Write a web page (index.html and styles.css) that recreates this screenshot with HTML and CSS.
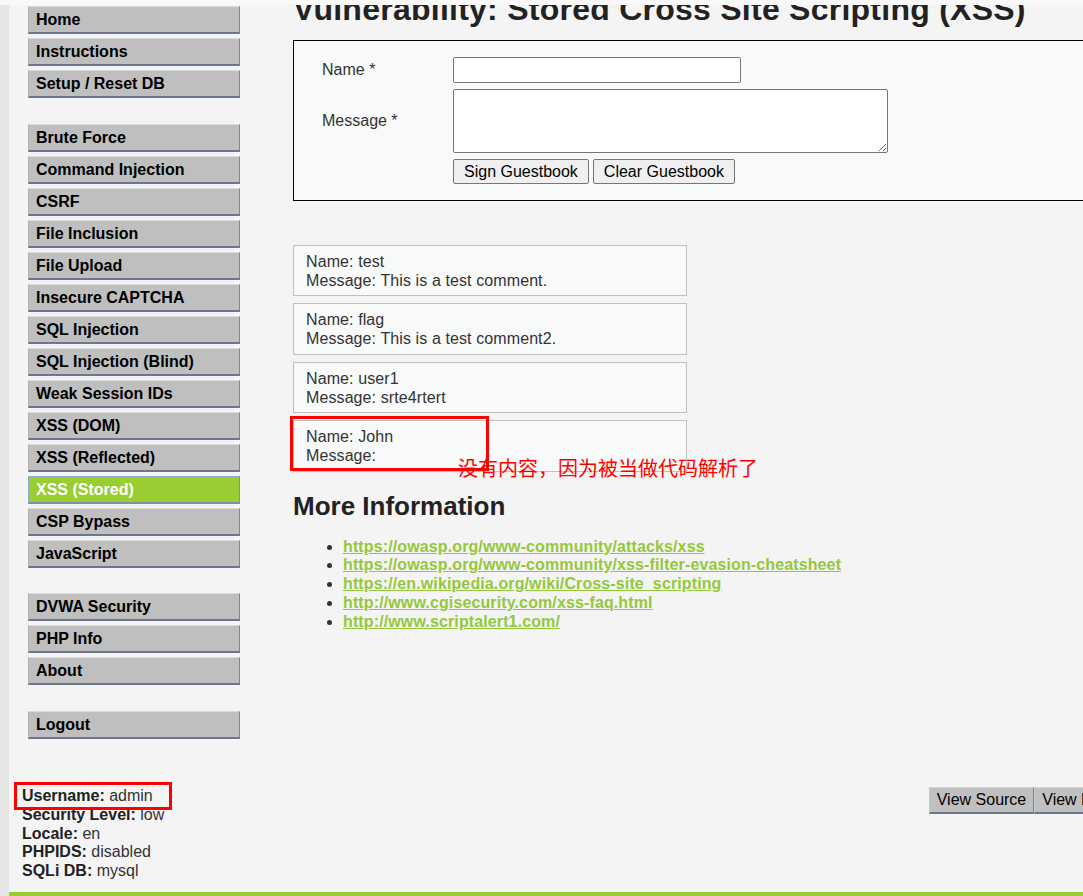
FILE: index.html
```html
<!DOCTYPE html>
<html lang="en">
<head>
<meta charset="utf-8">
<title>Vulnerability: Stored Cross Site Scripting (XSS)</title>
<link rel="stylesheet" href="styles.css">
</head>
<body>
<div class="topband"></div>
<div class="page">
  <div class="cols">
    <aside class="sidebar">
      <div class="menu">
        <ul class="group">
          <li><a class="item">Home</a></li>
          <li><a class="item">Instructions</a></li>
          <li><a class="item">Setup / Reset DB</a></li>
        </ul>
        <ul class="group">
          <li><a class="item">Brute Force</a></li>
          <li><a class="item">Command Injection</a></li>
          <li><a class="item">CSRF</a></li>
          <li><a class="item">File Inclusion</a></li>
          <li><a class="item">File Upload</a></li>
          <li><a class="item">Insecure CAPTCHA</a></li>
          <li><a class="item">SQL Injection</a></li>
          <li><a class="item">SQL Injection (Blind)</a></li>
          <li><a class="item">Weak Session IDs</a></li>
          <li><a class="item">XSS (DOM)</a></li>
          <li><a class="item">XSS (Reflected)</a></li>
          <li><a class="item active">XSS (Stored)</a></li>
          <li><a class="item">CSP Bypass</a></li>
          <li><a class="item">JavaScript</a></li>
        </ul>
        <ul class="group">
          <li><a class="item">DVWA Security</a></li>
          <li><a class="item">PHP Info</a></li>
          <li><a class="item">About</a></li>
        </ul>
        <ul class="group">
          <li><a class="item">Logout</a></li>
        </ul>
      </div>
      <div class="userinfo">
        <div class="mark mark-user"></div>
        <div><b>Username:</b> admin</div>
        <div><b>Security Level:</b> low</div>
        <div><b>Locale:</b> en</div>
        <div><b>PHPIDS:</b> disabled</div>
        <div><b>SQLi DB:</b> mysql</div>
      </div>
    </aside>
    <main class="content">
      <h1 class="title">Vulnerability: Stored Cross Site Scripting (XSS)</h1>
      <div class="code-area">
        <form class="gb-form">
          <label class="lbl">Name *</label>
          <div><input class="txt" type="text"></div>
          <label class="lbl">Message *</label>
          <div><textarea class="msg"></textarea></div>
          <span></span>
          <div class="btns">
            <button type="button" class="btn">Sign Guestbook</button>
            <button type="button" class="btn">Clear Guestbook</button>
          </div>
        </form>
      </div>
      <div class="comments">
        <div class="comment">Name: test<br>Message: This is a test comment.</div>
        <div class="comment">Name: flag<br>Message: This is a test comment2.</div>
        <div class="comment">Name: user1<br>Message: srte4rtert</div>
        <div class="comment annotated">Name: John<br>Message: 
          <div class="mark mark-john"></div>
          <div class="note">没有内容，因为被当做代码解析了</div>
        </div>
      </div>
      <h2 class="subtitle">More Information</h2>
      <ul class="links">
        <li><a class="link">https://owasp.org/www-community/attacks/xss</a></li>
        <li><a class="link">https://owasp.org/www-community/xss-filter-evasion-cheatsheet</a></li>
        <li><a class="link">https://en.wikipedia.org/wiki/Cross-site_scripting</a></li>
        <li><a class="link">http://www.cgisecurity.com/xss-faq.html</a></li>
        <li><a class="link">http://www.scriptalert1.com/</a></li>
      </ul>
      <div class="popups">
        <button type="button" class="popup">View Source</button>
        <button type="button" class="popup">View Help</button>
      </div>
    </main>
  </div>
  <div class="footer-bar"></div>
</div>
</body>
</html>
```
FILE: styles.css
```css
html, body {
  margin: 0;
  padding: 0;
  overflow: hidden;
  background: #f4f4f4;
}
body {
  width: 1083px;
  height: 896px;
  font-family: "Liberation Sans", Arial, sans-serif;
  font-size: 16px;
  line-height: 18.75px;
  color: #333;
  position: relative;
}
.topband {
  position: absolute;
  left: 0;
  top: 0;
  width: 100%;
  height: 5px;
  background: #f9f9f9;
  z-index: 5;
}
.page {
  height: 896px;
  box-sizing: border-box;
  border-left: 9px solid #e6e6e6;
  display: flex;
  flex-direction: column;
}
.cols {
  flex: 1;
  display: flex;
  min-height: 0;
}
.sidebar {
  width: 284px;
  flex-shrink: 0;
}
.menu {
  padding: 6px 0 0 19px;
}
.group {
  list-style: none;
  margin: 0;
  padding: 0;
  width: 212px;
}
.group + .group {
  margin-top: 25.5px;
}
.group li {
  margin-bottom: 4px;
}
.item {
  display: block;
  box-sizing: border-box;
  height: 28px;
  line-height: 24px;
  padding: 1px 0 0 7px;
  background: #bfbfbf;
  border-style: solid;
  border-width: 1px 1px 2px 1px;
  border-color: #dadada #7d8595 #6d778a #b2b2b2;
  color: #000;
  font-weight: bold;
  white-space: nowrap;
}
.item.active {
  background: #9acd32;
  color: #fff;
  border-color: #8fa9c0 #7e8fa8 #7e8fa8 #8fa9c0;
}
.userinfo {
  position: relative;
  margin: 48.5px 0 0 13px;
  color: #333;
}
.userinfo b {
  color: #222;
}
.mark {
  position: absolute;
  border: 3px solid #ff0000;
  box-sizing: border-box;
  z-index: 3;
}
.mark-user {
  left: -8px;
  top: -5px;
  width: 158px;
  height: 28px;
}
.content {
  width: 829px;
  flex-shrink: 0;
}
.title {
  margin: -10px 0 0 0;
  font-size: 32px;
  line-height: 38px;
  font-weight: bold;
  color: #222;
  letter-spacing: 0.25px;
  white-space: nowrap;
}
.code-area {
  margin-top: 12px;
  border: 1px solid #000;
  background: #f8f9f9;
  padding: 16px 20px 16px 28px;
}
.gb-form {
  display: grid;
  grid-template-columns: 131px auto;
  row-gap: 6px;
  align-items: center;
}
.lbl {
  color: #333;
}
.txt {
  display: block;
  box-sizing: border-box;
  width: 288px;
  height: 26px;
  border: 1px solid #767676;
  border-radius: 2px;
  background: #fff;
  margin: 0;
}
.msg {
  display: block;
  box-sizing: border-box;
  width: 435px;
  height: 64px;
  border: 1px solid #767676;
  border-radius: 2px;
  background: #fff;
  margin: 0;
}
.btns {
  display: flex;
  gap: 4px;
}
.btn {
  box-sizing: border-box;
  height: 25px;
  padding: 0 10px;
  margin: 0;
  font-family: "Liberation Sans", Arial, sans-serif;
  font-size: 16px;
  color: #000;
  background: #efefef;
  border: 1px solid #767676;
  border-radius: 2px;
}
.comments {
  margin-top: 44px;
}
.comment {
  width: 394px;
  box-sizing: border-box;
  padding: 7px 12px 5px;
  margin-bottom: 7px;
  border: 1px solid #c0c0c0;
  background: #f8f9f9;
  line-height: 18.7px;
  letter-spacing: 0.1px;
  color: #333;
}
.annotated {
  position: relative;
}
.mark-john {
  left: -4px;
  top: -5px;
  width: 199px;
  height: 55px;
}
.note {
  position: absolute;
  left: 164px;
  top: 37px;
  font-family: "Noto Sans CJK SC", "Noto Sans", sans-serif;
  font-size: 20px;
  line-height: 20px;
  letter-spacing: 0;
  color: #ff0000;
  white-space: nowrap;
  z-index: 4;
}
.subtitle {
  margin: 19px 0 0 0;
  font-size: 26px;
  line-height: 30px;
  font-weight: bold;
  color: #222;
}
.links {
  margin: 17px 0 0 0;
  padding-left: 50px;
  color: #333;
}
.link {
  color: #94c83b;
  font-weight: bold;
  letter-spacing: 0.12px;
  text-decoration: underline;
}
.popups {
  margin-top: 156px;
  display: flex;
  justify-content: flex-end;
}
.popup {
  box-sizing: border-box;
  height: 27px;
  padding: 0 7px;
  margin: 0;
  font-family: "Liberation Sans", Arial, sans-serif;
  font-size: 16px;
  line-height: 24px;
  color: #000;
  background: #c0c0c0;
  border-style: solid;
  border-width: 1px 1px 2px 1px;
  border-color: #d6d6d6 #7d8595 #6d778a #c8c8c8;
  border-radius: 0;
}
.footer-bar {
  height: 4px;
  background: #9acd32;
  flex-shrink: 0;
}
```
